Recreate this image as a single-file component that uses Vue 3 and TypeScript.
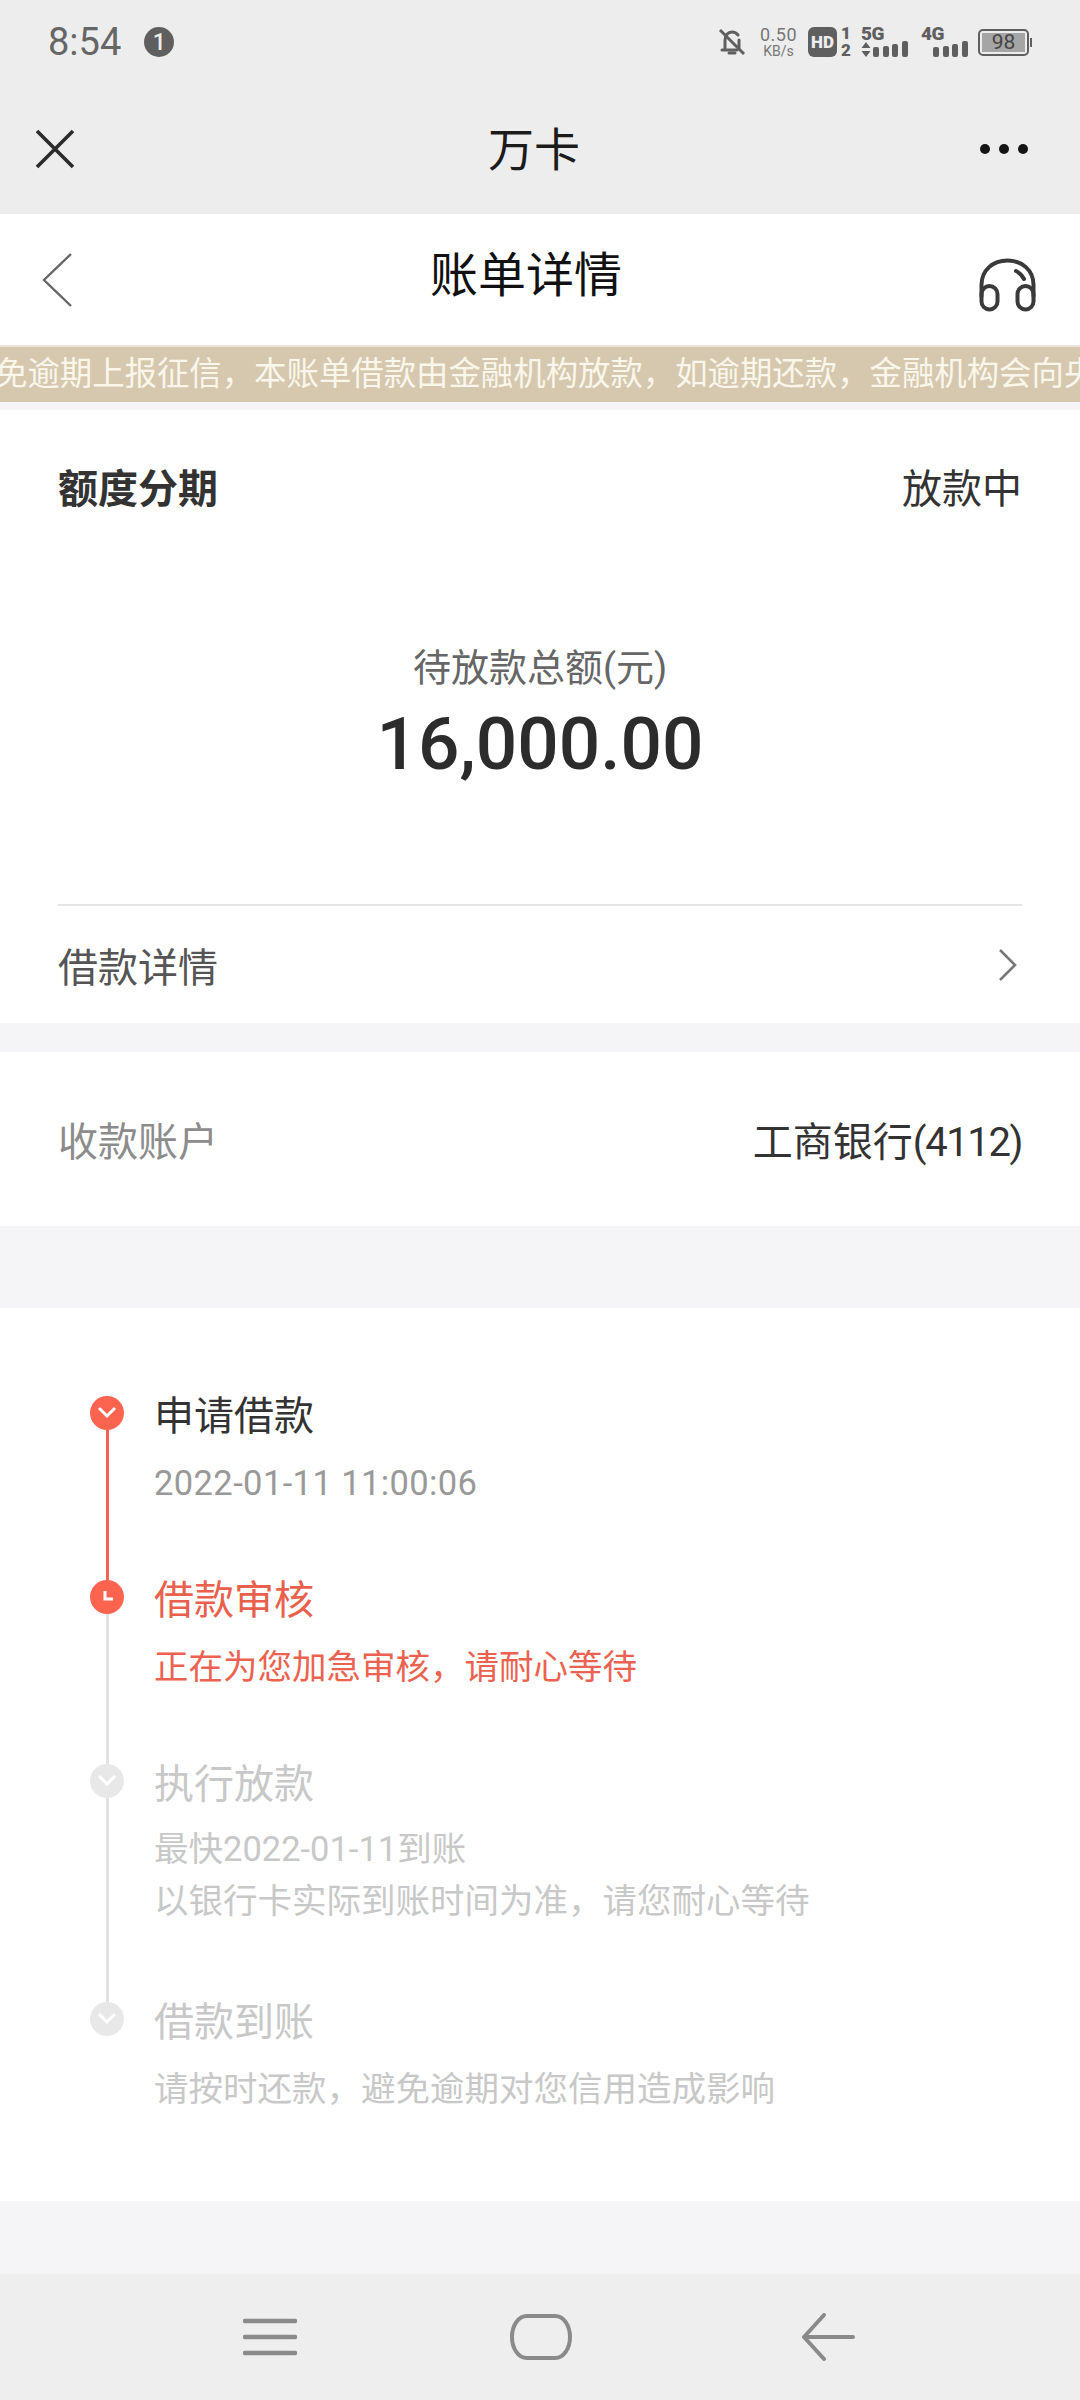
<template>
  <div class="page">
    <header class="chrome">
      <div class="status-bar">
        <div class="status-left">
          <span class="clock">8:54</span>
          <span class="badge">1</span>
        </div>
        <div class="status-right">
          <svg class="bell" width="28" height="30" viewBox="0 0 28 30" fill="none" stroke="#5f5f5f" stroke-width="3">
            <path d="M7 21V13c0-4.500 3-8 7-8 2.500 0 4.500 1 6 3M21 13v8M4 23h15" stroke-linecap="round" />
            <path d="M2 3l24 24" stroke-width="3" />
            <path d="M11 26h6" stroke-width="3" stroke-linecap="round" />
          </svg>
          <div class="speed"><span>0.50</span><span class="speed-unit">KB/s</span></div>
          <div class="hd"><span class="hd-box">HD</span><span class="hd-nums"><i>1</i><i>2</i></span></div>
          <div class="net five">
            <span class="net-label">5G</span>
            <div class="net-row">
              <svg width="10" height="15" viewBox="0 0 10 15" fill="#5f5f5f"><path d="M5 0l4.500 6h-9zM5 15L.5 9h9z" /></svg>
              <div class="bars"><i v-for="h in signalBars" :key="h" :style="{ height: h + 'px' }" /></div>
            </div>
          </div>
          <div class="net four">
            <span class="net-label">4G</span>
            <div class="bars"><i v-for="h in signalBars" :key="h" :style="{ height: h + 'px' }" /></div>
          </div>
          <div class="battery">
            <div class="battery-body"><span class="battery-fill">98</span></div>
            <i class="battery-cap" />
          </div>
        </div>
      </div>
      <div class="toolbar">
        <svg class="close" width="40" height="40" viewBox="0 0 40 40" stroke="#2b2b2b" stroke-width="3.600" fill="none">
          <path d="M2 2l36 36M38 2L2 38" />
        </svg>
        <span class="toolbar-title">万卡</span>
        <svg class="more" width="50" height="12" viewBox="0 0 50 12" fill="#151515">
          <circle cx="6" cy="6" r="5" /><circle cx="25" cy="6" r="5" /><circle cx="44" cy="6" r="5" />
        </svg>
      </div>
    </header>

    <div class="nav-head">
      <svg class="back" width="32" height="54" viewBox="0 0 32 54" fill="none" stroke="#666" stroke-width="2.400">
        <path d="M30 1L3 27l27 26" />
      </svg>
      <h1>账单详情</h1>
      <svg class="service" width="57" height="54" viewBox="0 0 57 54" fill="none" stroke="#3a3a3a" stroke-width="4" stroke-linecap="round">
        <path d="M2.500 38V27C2.500 12 14 2.500 28.500 2.500S54.500 12 54.500 27v11" />
        <rect x="2.500" y="28" width="16" height="23.500" rx="8" />
        <rect x="38.500" y="28" width="16" height="23.500" rx="8" />
        <path d="M37 13c3 1.500 6 4 8 8" />
      </svg>
    </div>

    <div class="notice"><span>免逾期上报征信，本账单借款由金融机构放款，如逾期还款，金融机构会向央</span></div>

    <section class="card summary">
      <div class="summary-head">
        <strong>额度分期</strong>
        <span>放款中</span>
      </div>
      <div class="total-label">待放款总额(元)</div>
      <div class="total">16,000.00</div>
      <div class="detail-row">
        <span>借款详情</span>
        <svg width="20" height="34" viewBox="0 0 20 34" fill="none" stroke="#777" stroke-width="2.600"><path d="M2 2l15 15L2 32" /></svg>
      </div>
    </section>

    <section class="card account">
      <span class="account-label">收款账户</span>
      <span class="account-value">工商银行<span class="tail">(4112)</span></span>
    </section>

    <section class="card timeline">
      <div v-for="(step, i) in steps" :key="step.title" class="step" :class="[step.state, { multi: step.lines.length > 1 }]">
        <div class="rail">
          <span class="dot">
            <svg v-if="step.state !== 'active'" width="22" height="16" viewBox="0 0 22 16" fill="none" stroke="#fff" stroke-width="3">
              <path d="M3 3l8 8 8-8" />
            </svg>
            <svg v-else width="16" height="16" viewBox="0 0 16 16" fill="none" stroke="#fff" stroke-width="3">
              <path d="M6 2v8h8" />
            </svg>
          </span>
          <i v-if="i < steps.length - 1" class="line" />
        </div>
        <div class="step-body">
          <div class="step-title">{{ step.title }}</div>
          <div v-for="line in step.lines" :key="line" class="step-line">{{ line }}</div>
        </div>
      </div>
    </section>

    <div class="filler" />

    <footer class="softkeys">
      <svg width="54" height="38" viewBox="0 0 54 38" fill="none" stroke="#8a8a8a" stroke-width="4.500" stroke-linecap="round">
        <path d="M2 3h50M2 19h50M2 35h50" />
      </svg>
      <svg class="key-home" width="62" height="46" viewBox="0 0 62 46" fill="none" stroke="#8a8a8a" stroke-width="4">
        <path d="M17 2h28c9 0 15 10 15 21s-6 21-15 21H17C8 44 2 34 2 23S8 2 17 2z" />
      </svg>
      <svg class="key-back" width="54" height="48" viewBox="0 0 54 48" fill="none" stroke="#8a8a8a" stroke-width="4" stroke-linecap="round" stroke-linejoin="round">
        <path d="M23 2L3 24l20 22M3 24h49" />
      </svg>
    </footer>
  </div>
</template>

<script setup lang="ts">
type StepState = 'done' | 'active' | 'todo';

interface Step {
  title: string;
  lines: string[];
  state: StepState;
}

const signalBars = [10, 11, 13, 16];

const steps: Step[] = [
  { title: '申请借款', lines: ['2022-01-11 11:00:06'], state: 'done' },
  { title: '借款审核', lines: ['正在为您加急审核，请耐心等待'], state: 'active' },
  {
    title: '执行放款',
    lines: ['最快2022-01-11到账', '以银行卡实际到账时间为准，请您耐心等待'],
    state: 'todo',
  },
  { title: '借款到账', lines: ['请按时还款，避免逾期对您信用造成影响'], state: 'todo' },
];
</script>

<style>
html,
body {
  margin: 0;
  background: #f5f5f7;
}
</style>

<style scoped>
.page {
  width: 1080px;
  height: 2400px;
  display: flex;
  flex-direction: column;
  background: #f5f5f7;
  font-family: Roboto, "Noto Sans CJK SC", sans-serif;
  color: #333;
  overflow: hidden;
}

.chrome {
  height: 214px;
  background: #ededed;
  flex: none;
}

.status-bar {
  height: 84px;
  padding: 0 48px;
  display: flex;
  justify-content: space-between;
  align-items: center;
}
.status-left {
  display: flex;
  align-items: center;
  gap: 23px;
}
.clock {
  font-size: 38px;
  color: #666;
}
.badge {
  width: 30px;
  height: 30px;
  border-radius: 50%;
  background: #5f5f5f;
  color: #eee;
  font-size: 23px;
  font-weight: 500;
  display: flex;
  align-items: center;
  justify-content: center;
}
.status-right {
  display: flex;
  align-items: center;
  color: #5f5f5f;
  height: 30px;
}
.speed {
  width: 37px;
  margin-left: 14px;
  display: flex;
  flex-direction: column;
  align-items: center;
  font-size: 18px;
  line-height: 18px;
  letter-spacing: 0.500px;
  color: #777;
  white-space: nowrap;
}
.speed-unit {
  font-size: 14px;
  line-height: 14px;
  letter-spacing: 0;
}
.hd {
  margin-left: 11px;
  display: flex;
  align-items: center;
}
.hd-box {
  width: 29px;
  height: 30px;
  border-radius: 6px;
  background: #5f5f5f;
  color: #eee;
  font-size: 17px;
  font-weight: 900;
  display: flex;
  align-items: center;
  justify-content: center;
}
.hd-nums {
  display: flex;
  flex-direction: column;
  margin-left: 4px;
  width: 9px;
  font-size: 17px;
  line-height: 17px;
  font-weight: 900;
}
.hd-nums i {
  font-style: normal;
}
.net {
  width: 47px;
  display: flex;
  flex-direction: column;
}
.net.five {
  margin-left: 11px;
}
.net.four {
  margin-left: 13px;
}
.net-label {
  font-size: 19px;
  font-weight: 900;
  height: 14px;
  line-height: 14px;
  letter-spacing: -0.5px;
}
.net-row {
  display: flex;
  align-items: flex-end;
  gap: 2px;
}
.net.four .bars {
  margin-left: 12px;
}
.bars {
  display: flex;
  align-items: flex-end;
  gap: 3.5px;
  height: 16px;
}
.bars i {
  width: 6px;
  border-radius: 2px;
  background: #5f5f5f;
}
.battery {
  margin-left: 10px;
  display: flex;
  align-items: center;
}
.battery-body {
  width: 51px;
  height: 27px;
  padding: 2px;
  box-sizing: border-box;
  border: 2px solid #5f5f5f;
  border-radius: 5px;
}
.battery-fill {
  display: block;
  height: 19px;
  background: #a5a5a5;
  color: #444;
  font-size: 21px;
  line-height: 19px;
  text-align: center;
}
.battery-cap {
  width: 2px;
  height: 9px;
  margin-left: 1px;
  background: #5f5f5f;
}

.toolbar {
  height: 130px;
  padding: 0 51px 0 35px;
  display: flex;
  align-items: center;
  justify-content: space-between;
  position: relative;
}
.toolbar-title {
  position: absolute;
  left: 0;
  right: 12px;
  top: 36px;
  text-align: center;
  font-size: 46px;
  line-height: 60px;
  color: #1b1b1b;
}

.nav-head {
  height: 131px;
  flex: none;
  background: #fff;
  padding: 0 44px 0 41px;
  display: flex;
  align-items: center;
  justify-content: space-between;
  box-sizing: border-box;
  position: relative;
}
.nav-head .service {
  margin-top: 10px;
}
.nav-head h1 {
  position: absolute;
  left: 430px;
  top: 30px;
  margin: 0;
  font-size: 48px;
  line-height: 64px;
  font-weight: 400;
  color: #111;
}

.notice {
  height: 57px;
  flex: none;
  border-top: 2px solid #ede4d6;
  box-sizing: border-box;
  background: #d5c8ae;
  color: #fbf6ea;
  font-size: 32.400px;
  line-height: 54px;
  white-space: nowrap;
  overflow: hidden;
}
.notice span {
  display: inline-block;
  margin-left: -5px;
}

.card {
  background: #fff;
  flex: none;
}

.summary {
  margin-top: 8px;
  padding: 0 58px;
  height: 613px;
  box-sizing: border-box;
  display: flex;
  flex-direction: column;
}
.summary-head {
  display: flex;
  justify-content: space-between;
  align-items: center;
  height: 60px;
  margin-top: 46px;
  font-size: 40px;
  color: #333;
}
.summary-head strong {
  font-weight: 700;
}
.total-label {
  margin-top: 127px;
  text-align: center;
  font-size: 38px;
  line-height: 50px;
  color: #666;
}
.total {
  margin-top: 1px;
  text-align: center;
  font-size: 73px;
  line-height: 100px;
  font-weight: 500;
  color: #2c2c2c;
}
.detail-row {
  margin-top: 110px;
  border-top: 2px solid #e6e6e6;
  height: 119px;
  box-sizing: border-box;
  padding-right: 4px;
  font-size: 40px;
  color: #555;
  display: flex;
  justify-content: space-between;
  align-items: center;
}

.account {
  margin-top: 29px;
  height: 174px;
  padding: 0 58px;
  display: flex;
  justify-content: space-between;
  align-items: center;
  font-size: 40px;
}
.account-label {
  color: #8c8c8c;
}
.account-value {
  color: #333;
}
.account-value .tail {
  letter-spacing: -1.400px;
}

.timeline {
  margin-top: 82px;
  height: 893px;
  box-sizing: border-box;
  padding: 79px 0 0 90px;
}
.step {
  display: flex;
}
.rail {
  width: 34px;
  display: flex;
  flex-direction: column;
  align-items: center;
  flex: none;
  margin-top: 9px;
  margin-bottom: -9px;
}
.dot {
  width: 34px;
  height: 34px;
  border-radius: 50%;
  flex: none;
  display: flex;
  align-items: center;
  justify-content: center;
  background: #e8e8e8;
}
.line {
  flex: 1;
  width: 3px;
  background: #e2e2e2;
}
.step-body {
  margin-left: 30px;
  padding-bottom: 62px;
}
.step-title {
  font-size: 40px;
  line-height: 60px;
  margin-bottom: 11px;
  color: #333;
}
.step-line {
  font-size: 34.500px;
  line-height: 51px;
  color: #999;
}
.step.done .step-line {
  letter-spacing: 0.400px;
}
.step.multi .step-body {
  padding-bottom: 66px;
}
.step.multi .step-title {
  margin-bottom: 8px;
}
.step.multi .step-line {
  line-height: 52px;
}
.step.done .dot,
.step.active .dot {
  background: #fd6450;
}
.step.done .line {
  background: #fd6450;
}
.step.active .step-title {
  color: #e9604c;
}
.step.active .step-line {
  color: #eb6350;
}
.step.todo .step-title {
  color: #c8c8c8;
}
.step.todo .step-line {
  color: #c8c8c8;
}

.filler {
  flex: 1;
}

.softkeys {
  height: 126px;
  flex: none;
  background: #eeeeee;
  padding-left: 243px;
  display: flex;
  align-items: center;
}
.key-home {
  margin-left: 213px;
}
.key-back {
  margin-left: 229px;
}
</style>
